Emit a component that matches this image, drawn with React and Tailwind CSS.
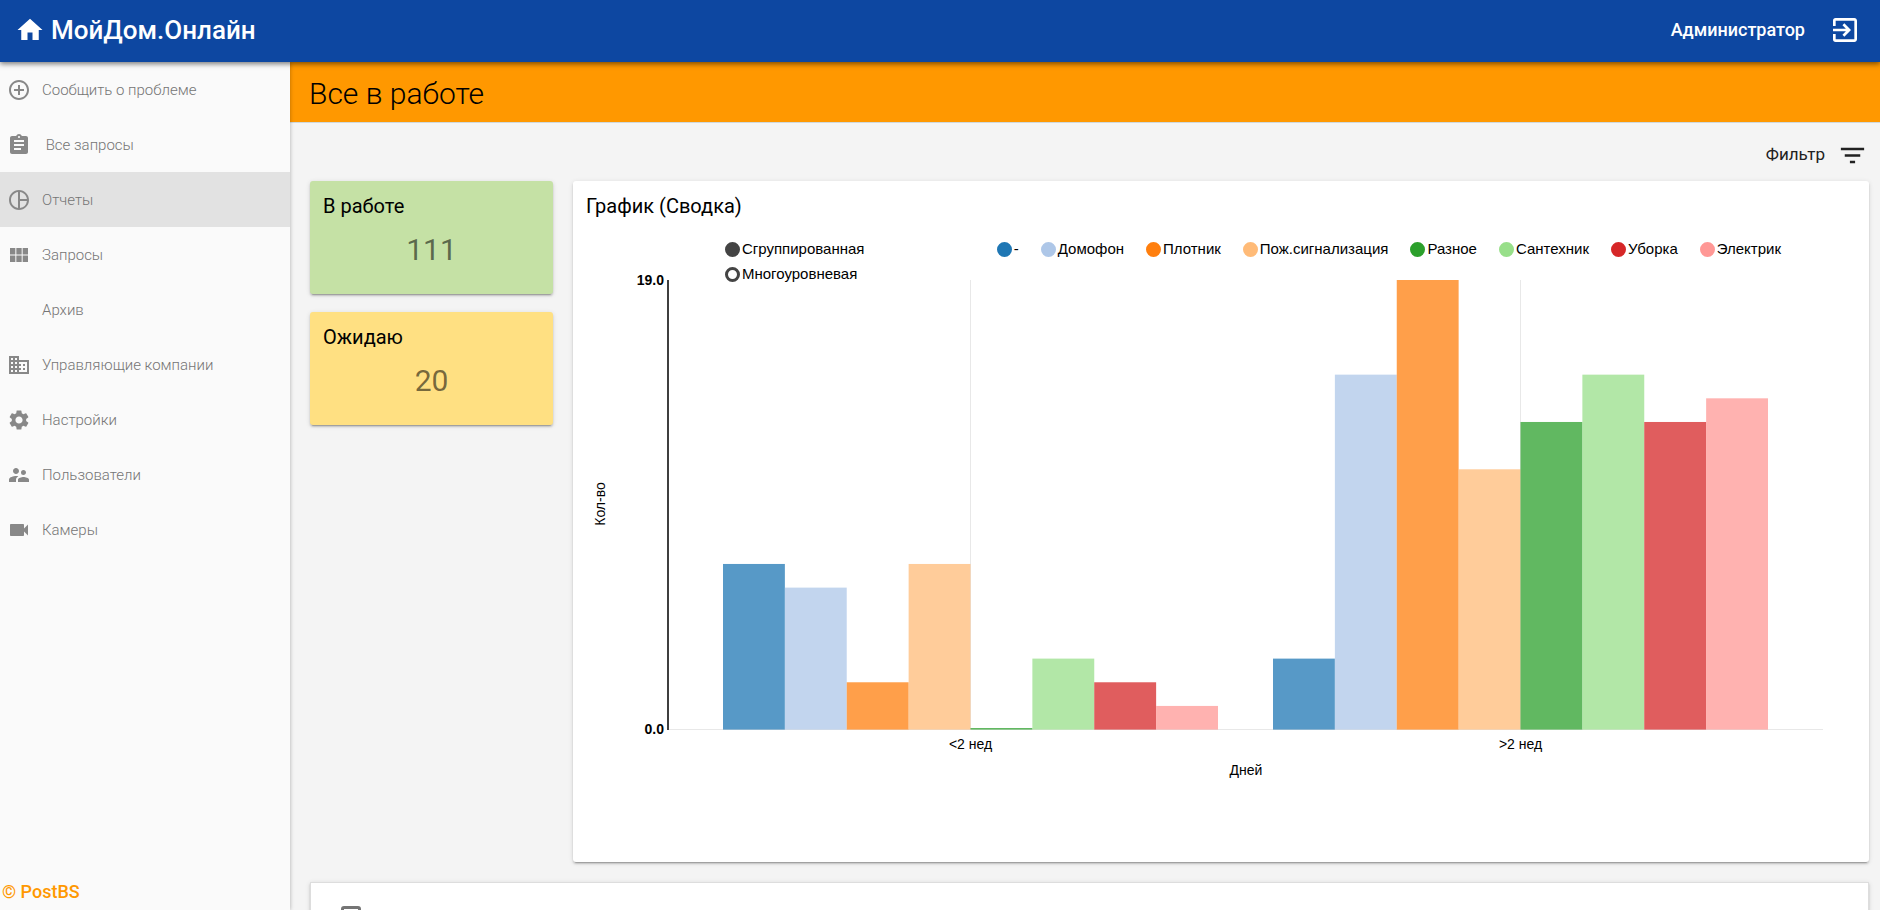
import { useState } from "react";
import {
  MdHome,
  MdExitToApp,
  MdAddCircleOutline,
  MdAssignment,
  MdPieChartOutline,
  MdViewModule,
  MdBusiness,
  MdSettings,
  MdSupervisorAccount,
  MdVideocam,
  MdFilterList,
} from "react-icons/md";

const menu = [
  { label: "Сообщить о проблеме", icon: MdAddCircleOutline },
  { label: "\u00a0Все запросы", icon: MdAssignment },
  { label: "Отчеты", icon: MdPieChartOutline, active: true },
  { label: "Запросы", icon: MdViewModule },
  { label: "Архив", icon: null },
  { label: "Управляющие компании", icon: MdBusiness },
  { label: "Настройки", icon: MdSettings },
  { label: "Пользователи", icon: MdSupervisorAccount },
  { label: "Камеры", icon: MdVideocam },
];

const series = [
  { name: "-", color: "#1f77b4", values: [7, 3] },
  { name: "Домофон", color: "#aec7e8", values: [6, 15] },
  { name: "Плотник", color: "#ff7f0e", values: [2, 19] },
  { name: "Пож.сигнализация", color: "#ffbb78", values: [7, 11] },
  { name: "Разное", color: "#2ca02c", values: [0, 13] },
  { name: "Сантехник", color: "#98df8a", values: [3, 15] },
  { name: "Уборка", color: "#d62728", values: [2, 13] },
  { name: "Электрик", color: "#ff9896", values: [1, 14] },
];
const groups = ["<2 нед", ">2 нед"];

const LEFT = 95;
const TOP = 4;
const WIDTH = 1155;
const HEIGHT = 449.6;
const MAX = 19;
const STEP = WIDTH / (groups.length + 0.1);
const BAND = STEP * 0.9;

const cardShadow =
  "shadow-[0_2px_2px_0_rgba(0,0,0,0.14),0_3px_1px_-2px_rgba(0,0,0,0.2),0_1px_5px_0_rgba(0,0,0,0.12)]";

function BarChart({ hidden }) {
  const shown = series.filter((s) => !hidden.includes(s.name));
  const barWidth = BAND / Math.max(shown.length, 1);
  const base = TOP + HEIGHT;
  return (
    <svg
      viewBox="0 0 1296 504"
      className="-mt-2 block h-auto w-full overflow-visible font-['Liberation_Sans',Arial,sans-serif] text-[14px]"
      role="img"
      aria-label="График"
    >
      <path d={`M${LEFT} 453.5H${LEFT + WIDTH}`} stroke="#e8e8e8" />
      {groups.map((g, i) => {
        const x = Math.floor(LEFT + STEP * (i + 0.1) + BAND / 2) + 0.5;
        return (
          <g key={g}>
            <path d={`M${x} ${TOP}V${base}`} stroke="#e8e8e8" />
            <text x={x} y="473" textAnchor="middle">
              {g}
            </text>
          </g>
        );
      })}
      {groups.map((g, i) =>
        shown.map((s, j) => {
          const h = Math.max((s.values[i] / MAX) * HEIGHT, 1.6);
          return (
            <rect
              key={g + s.name}
              x={LEFT + STEP * (i + 0.1) + barWidth * j}
              y={base - h}
              width={barWidth}
              height={h}
              fill={s.color}
              fillOpacity="0.75"
            />
          );
        })
      )}
      <path d={`M${LEFT} ${TOP}V454`} stroke="#3f3f3f" strokeWidth="2" />
      <text x="91" y="9" textAnchor="end" fontWeight="700">
        19.0
      </text>
      <text x="91" y="458" textAnchor="end" fontWeight="700">
        0.0
      </text>
      <text x="673" y="499" textAnchor="middle">
        Дней
      </text>
      <text transform="translate(32 228) rotate(-90)" textAnchor="middle">
        Кол-во
      </text>
    </svg>
  );
}

function StatCard({ title, value, tone }) {
  return (
    <section className={`rounded-[3px] px-[13px] pt-[11px] pb-6 ${tone} ${cardShadow}`}>
      <h2 className="text-xl leading-7">{title}</h2>
      <p className="pt-2.5 text-center text-3xl leading-10 text-black/55">{value}</p>
    </section>
  );
}

export default function App() {
  const [hidden, setHidden] = useState([]);
  const toggle = (name) =>
    setHidden((h) => (h.includes(name) ? h.filter((n) => n !== name) : [...h, name]));

  return (
    <div className="flex h-screen flex-col bg-[#f4f4f4] font-[Roboto,sans-serif] text-black">
      <header className="z-20 flex h-[62px] shrink-0 items-center justify-between bg-[#0d47a1] pr-[19px] pb-0.5 pl-[15px] text-white shadow-[0_2px_5px_0_rgba(0,0,0,0.5)]">
        <a href="#" className="flex items-center gap-1.5 text-[26px] font-medium">
          <MdHome size={30} />
          МойДом.Онлайн
        </a>
        <div className="flex items-center gap-6">
          <span className="text-lg font-medium">Администратор</span>
          <button type="button" aria-label="Выйти">
            <MdExitToApp size={32} />
          </button>
        </div>
      </header>

      <div className="flex min-h-0 flex-1">
        <aside className="z-10 flex w-[290px] shrink-0 flex-col bg-[#fafafa] shadow-[0_0_4px_0_rgba(0,0,0,0.3)]">
          <nav className="flex-1">
            {menu.map(({ label, icon: Icon, active }) => (
              <a
                key={label}
                href="#"
                className={`flex h-[55px] items-center gap-[11px] px-[7px] text-[15px] font-light text-[#757575] ${
                  active ? "bg-[#e2e2e2]" : ""
                }`}
              >
                <span className="size-6 shrink-0 text-[#888888]">{Icon && <Icon size={24} />}</span>
                <span className="pt-0.5">{label}</span>
              </a>
            ))}
          </nav>
          <p className="px-0.5 pb-1 text-lg leading-7 font-medium text-[#ff9800]">© PostBS</p>
        </aside>

        <main className="min-w-0 flex-1 overflow-y-auto [scrollbar-width:none]">
          <div className="flex h-[61px] items-center border-b border-[#cfd8dc] bg-[#ff9800] px-[19px] pt-1">
            <h1 className="text-3xl font-light">Все в работе</h1>
          </div>

          <div className="flex h-[58px] items-center justify-end pt-1.5 pr-3">
            <button type="button" className="flex items-center gap-3 text-[17px] text-[#212121]">
              Фильтр
              <MdFilterList size={31} />
            </button>
          </div>

          <div className="flex flex-col gap-5 pr-[11px] pb-5 pl-5">
            <div className="flex items-start gap-5">
              <div className="flex w-[243px] shrink-0 flex-col gap-[18px]">
                <StatCard title="В работе" value="111" tone="bg-[#c5e1a5]" />
                <StatCard title="Ожидаю" value="20" tone="bg-[#ffe082]" />
              </div>

              <section className={`min-w-0 flex-1 rounded-[3px] bg-white pb-[82px] ${cardShadow}`}>
                <h2 className="px-[13px] pt-[11px] text-xl leading-7">График (Сводка)</h2>
                <div className="flex items-start justify-between pt-[19px] pr-[88px] pl-[152px] font-['Liberation_Sans',Arial,sans-serif] text-[15px] leading-5">
                  <fieldset className="flex flex-col gap-[5px]">
                    {["Сгруппированная", "Многоуровневая"].map((name, i) => (
                      <label key={name} className="flex items-center gap-0.5">
                        <input
                          type="radio"
                          name="mode"
                          defaultChecked={i === 0}
                          className="size-[15px] appearance-none rounded-full border-[3px] border-[#444444] checked:bg-[#444444]"
                        />
                        {name}
                      </label>
                    ))}
                  </fieldset>
                  <div className="flex gap-[22px]">
                    {series.map((s) => (
                      <label key={s.name} className="flex items-center gap-0.5">
                        <input
                          type="checkbox"
                          checked={!hidden.includes(s.name)}
                          onChange={() => toggle(s.name)}
                          className="size-[15px] appearance-none rounded-full border-2 border-current checked:bg-current"
                          style={{ color: s.color }}
                        />
                        {s.name}
                      </label>
                    ))}
                  </div>
                </div>
                <BarChart hidden={hidden} />
              </section>
            </div>

            <section className="h-64 border border-[#dddddd] bg-white px-[30px] pt-[23px] shadow-[0_2px_2px_0_rgba(0,0,0,0.14),0_1px_5px_0_rgba(0,0,0,0.12)]">
              <input
                type="checkbox"
                aria-label="Выбрать все"
                className="block size-5 appearance-none rounded-[3px] border-[3px] border-[#757575]"
              />
            </section>
          </div>
        </main>
      </div>
    </div>
  );
}
